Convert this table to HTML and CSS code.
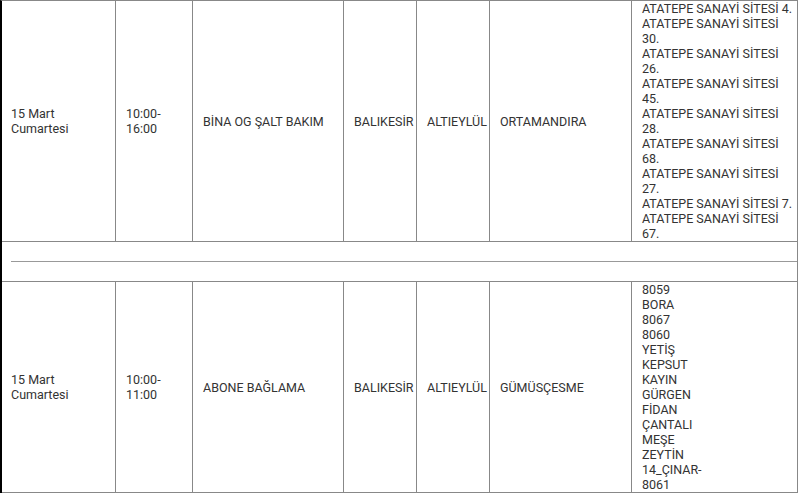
FILE: index.html
```html
<!DOCTYPE html>
<html lang="tr">
<head>
<meta charset="utf-8">
<title>Kesinti Listesi</title>
<link rel="stylesheet" href="styles.css">
</head>
<body>
<table class="outages">
  <colgroup>
    <col class="c-date">
    <col class="c-time">
    <col class="c-work">
    <col class="c-city">
    <col class="c-district">
    <col class="c-hood">
    <col class="c-streets">
  </colgroup>
  <tbody>
    <tr class="row-main">
      <td class="first">15 Mart<br>Cumartesi</td>
      <td>10:00-<br>16:00</td>
      <td>BİNA OG ŞALT BAKIM</td>
      <td>BALIKESİR</td>
      <td>ALTIEYLÜL</td>
      <td>ORTAMANDIRA</td>
      <td class="streets">ATATEPE SANAYİ SİTESİ 4.<br>ATATEPE SANAYİ SİTESİ<br>30.<br>ATATEPE SANAYİ SİTESİ<br>26.<br>ATATEPE SANAYİ SİTESİ<br>45.<br>ATATEPE SANAYİ SİTESİ<br>28.<br>ATATEPE SANAYİ SİTESİ<br>68.<br>ATATEPE SANAYİ SİTESİ<br>27.<br>ATATEPE SANAYİ SİTESİ 7.<br>ATATEPE SANAYİ SİTESİ<br>67.</td>
    </tr>
    <tr class="row-sep">
      <td colspan="7" class="sep"><div class="rule"></div></td>
    </tr>
    <tr class="row-main">
      <td class="first">15 Mart<br>Cumartesi</td>
      <td>10:00-<br>11:00</td>
      <td>ABONE BAĞLAMA</td>
      <td>BALIKESİR</td>
      <td>ALTIEYLÜL</td>
      <td>GÜMÜSÇESME</td>
      <td class="streets">8059<br>BORA<br>8067<br>8060<br>YETİŞ<br>KEPSUT<br>KAYIN<br>GÜRGEN<br>FİDAN<br>ÇANTALI<br>MEŞE<br>ZEYTİN<br>14_ÇINAR-<br>8061</td>
    </tr>
  </tbody>
</table>
</body>
</html>
```

FILE: styles.css
```css
html, body {
  margin: 0;
  padding: 0;
  background: #ffffff;
}

.outages {
  table-layout: fixed;
  border-collapse: separate;
  border-spacing: 0;
  width: 798px;
  border-left: 2px solid #000000;
  border-top: 1px solid #888888;
  font-family: Roboto, "Liberation Sans", Arial, sans-serif;
  font-size: 12.5px;
  line-height: 15px;
  color: #333333;
}

.c-date { width: 114px; }
.c-time { width: 77px; }
.c-work { width: 151px; }
.c-city { width: 73px; }
.c-district { width: 73px; }
.c-hood { width: 142px; }
.c-streets { width: 166px; }

.outages td {
  border-right: 1px solid #888888;
  border-bottom: 1px solid #888888;
  padding: 0 0 0 10px;
  vertical-align: middle;
  white-space: nowrap;
  overflow: visible;
}

.outages td.first {
  padding-left: 9px;
}

.outages td.sep {
  padding: 19px 0 19px 9px;
}

.rule {
  height: 1px;
  background: #999999;
}
```
